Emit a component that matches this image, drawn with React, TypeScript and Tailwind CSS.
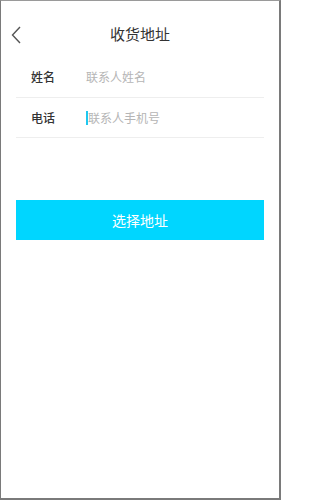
export default function App() {
  return (
    <div
      className="w-[281px] h-[500px] bg-white border-l border-t border-r-2 border-b-2 border-l-[#7a7a7a] border-t-[#9a9a9a] border-r-[#7a7a7a] border-b-[#7a7a7a] flex flex-col"
      style={{ fontFamily: '"Noto Sans CJK SC", "Noto Sans", sans-serif' }}
    >
      {/* header */}
      <div className="relative h-[56px] flex items-center justify-center">
        <svg
          className="absolute left-[10px] top-[25px]"
          width="10"
          height="18"
          viewBox="0 0 10 18"
          fill="none"
          stroke="#555"
          strokeWidth="1.4"
        >
          <path d="M9 1L1.5 9L9 17" />
        </svg>
        <span className="text-[15px] text-[#333] mt-[11px]">收货地址</span>
      </div>

      {/* form */}
      <div className="mx-[15px]">
        <div className="h-[41px] flex items-center border-b border-[#eeeeee]">
          <span className="w-[70px] pl-[15px] text-[12px] font-medium text-[#333]">姓名</span>
          <span className="text-[12px] text-[#b5b5b5]">联系人姓名</span>
        </div>
        <div className="h-[40px] flex items-center border-b border-[#eeeeee]">
          <span className="w-[70px] pl-[15px] text-[12px] font-medium text-[#333]">电话</span>
          <span className="w-[2px] h-[14px] bg-[#1ec8f0]"></span>
          <span className="text-[12px] text-[#b5b5b5]">联系人手机号</span>
        </div>
      </div>

      <div className="mx-[15px] mt-[62px] h-[40px] bg-[#00d6ff] flex items-center justify-center">
        <span className="text-[14px] text-white">选择地址</span>
      </div>
    </div>
  );
}
